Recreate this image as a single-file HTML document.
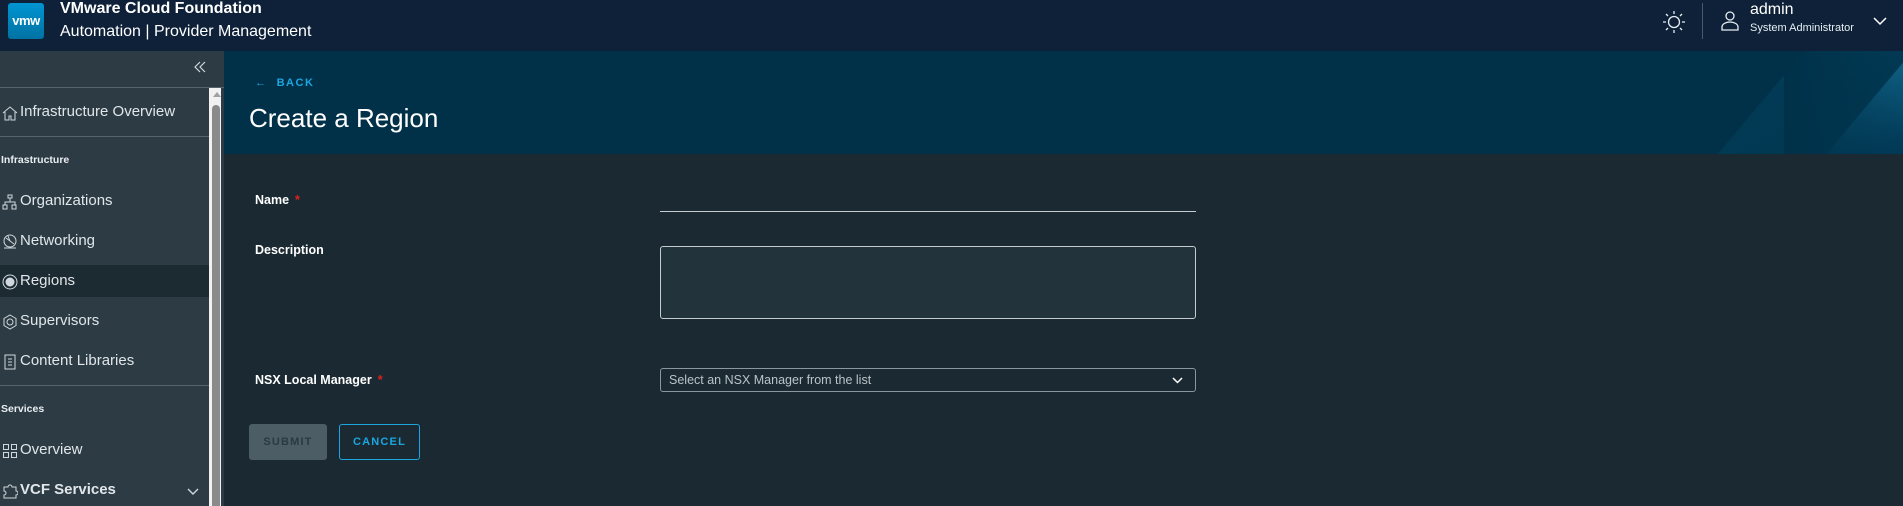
<!DOCTYPE html>
<html><head><style>
*{margin:0;padding:0;box-sizing:border-box}
body{width:1903px;height:506px;overflow:hidden;background:#1b2a32;font-family:"Liberation Sans",sans-serif;position:relative}
.hdr{position:absolute;left:0;top:0;width:1903px;height:51px;background:#0e2139}
.logo{position:absolute;left:8px;top:3px;width:36px;height:36px;border-radius:3px;background:linear-gradient(180deg,#0095d3,#0072a3);color:#fff;font-weight:bold;font-size:13px;text-align:center;line-height:36px;letter-spacing:-0.5px}
.t1{position:absolute;left:60px;top:0;color:#fff;font-weight:bold;font-size:16px}
.t2{position:absolute;left:60px;top:23px;color:#fff;font-size:16px}
.side{position:absolute;left:0;top:51px;width:224px;height:455px;background:#2d3c44}
.it{position:absolute;left:0;color:#e0e6ea;font-size:15px;height:20px;line-height:20px}
.it svg{position:absolute;left:2px;top:3px}
.it span{position:absolute;left:20px;white-space:nowrap}
.sec{position:absolute;left:1px;color:#e8edf0;font-size:10.5px;font-weight:bold}
.div{position:absolute;left:0;width:209px;height:1px;background:#56656d}
.banner{position:absolute;left:224px;top:51px;width:1679px;height:103px;background:#003149;overflow:hidden}
.lbl{position:absolute;color:#fff;font-size:12.5px;font-weight:bold}
.lbl b{color:#e02020;margin-left:6px}
</style></head><body>
<div class="hdr">
 <div class="logo">vmw</div>
 <div class="t1">VMware Cloud Foundation</div>
 <div class="t2">Automation | Provider Management</div>
 <svg style="position:absolute;left:1662px;top:10px" width="24" height="24" viewBox="0 0 24 24" fill="none" stroke="#e6eef2" stroke-width="1.3"><circle cx="12" cy="12" r="5.5"/><path d="M12 1v3M12 20v3M1 12h3M20 12h3M4 4l2 2M18 18l2 2M4 20l2-2M18 6l2-2"/></svg>
 <div style="position:absolute;left:1702px;top:3px;width:1px;height:36px;background:#4a5a68"></div>
 <svg style="position:absolute;left:1720px;top:10px" width="20" height="22" viewBox="0 0 20 22" fill="none" stroke="#e6eef2" stroke-width="1.3"><circle cx="10" cy="6" r="4"/><path d="M2 20v-3c0-3 4-5 8-5s8 2 8 5v3z"/></svg>
 <div style="position:absolute;left:1750px;top:1px;color:#fff;font-size:16px">admin</div>
 <div style="position:absolute;left:1750px;top:22px;color:#e6eef2;font-size:11px">System Administrator</div>
 <svg style="position:absolute;left:1873px;top:17px" width="14" height="9" viewBox="0 0 14 9" fill="none" stroke="#fff" stroke-width="1.5"><path d="M1 1l6 6 6-6"/></svg>
</div>
<div class="side">
 <svg style="position:absolute;left:193px;top:9px" width="14" height="14" viewBox="0 0 14 14" fill="none" stroke="#cfd8dc" stroke-width="1.2"><path d="M7 2L2 7l5 5M12 2L7 7l5 5"/></svg>
 <div class="div" style="top:36px;width:224px"></div>
 <div class="it" style="top:51px"><svg width="16" height="16" viewBox="0 0 16 16" fill="none" stroke="#cfd8dc"><path d="M1 8L8 2l7 6M3 7v8h4v-4h2v4h4V7"/></svg><span>Infrastructure Overview</span></div>
 <div class="div" style="top:85px"></div>
 <div class="sec" style="top:103px">Infrastructure</div>
 <div class="it" style="top:140px"><svg width="16" height="16" viewBox="0 0 16 16" fill="none" stroke="#cfd8dc"><rect x="6" y="1" width="4" height="3"/><rect x="1" y="11" width="4" height="4"/><rect x="10" y="11" width="4" height="4"/><path d="M8 4v4M3 11V8h10v3"/></svg><span>Organizations</span></div>
 <div class="it" style="top:180px"><svg width="16" height="16" viewBox="0 0 16 16" fill="none" stroke="#cfd8dc"><circle cx="8" cy="7" r="6"/><path d="M2 14h12M4 4l8 6M6 2l2 5"/></svg><span>Networking</span></div>
 <div style="position:absolute;left:0;top:214px;width:209px;height:32px;background:#1c2a31"></div>
 <div class="it" style="top:220px"><svg width="16" height="16" viewBox="0 0 16 16" fill="none" stroke="#cfd8dc"><circle cx="8" cy="8" r="7"/><circle cx="8" cy="8" r="4" fill="#cfd8dc"/></svg><span>Regions</span></div>
 <div class="it" style="top:260px"><svg width="16" height="16" viewBox="0 0 16 16" fill="none" stroke="#cfd8dc"><path d="M8 1l6 3.5v7L8 15l-6-3.5v-7z"/><circle cx="8" cy="8" r="3"/></svg><span>Supervisors</span></div>
 <div class="it" style="top:300px"><svg width="16" height="16" viewBox="0 0 16 16" fill="none" stroke="#cfd8dc"><rect x="3" y="1" width="10" height="14"/><path d="M6 5h4M6 8h4M6 11h4"/></svg><span>Content Libraries</span></div>
 <div class="div" style="top:334px"></div>
 <div class="sec" style="top:352px">Services</div>
 <div class="it" style="top:389px"><svg width="16" height="16" viewBox="0 0 16 16" fill="none" stroke="#cfd8dc"><rect x="1.5" y="1.5" width="5" height="5"/><rect x="9.5" y="1.5" width="5" height="5"/><rect x="1.5" y="9.5" width="5" height="5"/><rect x="9.5" y="9.5" width="5" height="5"/></svg><span>Overview</span></div>
 <div class="it" style="top:429px;font-weight:bold"><svg width="16" height="16" viewBox="0 0 16 16" fill="none" stroke="#cfd8dc"><path d="M2 4h4a2 2 0 014 0h4v4a2 2 0 010 4v3H2v-3a2 2 0 000-4z"/></svg><span>VCF Services</span></div>
 <svg style="position:absolute;left:187px;top:437px" width="12" height="8" viewBox="0 0 12 8" fill="none" stroke="#cfd8dc" stroke-width="1.4"><path d="M1 1l5 5 5-5"/></svg>
 <div style="position:absolute;left:209px;top:37px;width:12px;height:418px;background:#f1f1f1"></div>
 <div style="position:absolute;left:213px;top:41px;width:0;height:0;border-left:4px solid transparent;border-right:4px solid transparent;border-bottom:5px solid #a0a0a0"></div>
 <div style="position:absolute;left:212px;top:54px;width:8px;height:401px;background:#8a8a8a;border-radius:4px 4px 0 0"></div>
</div>
<div class="banner">
 <div style="position:absolute;left:1530px;top:-20px;width:120px;height:160px;background:linear-gradient(135deg,#064a6a,#003a55);transform:skewX(-40deg);opacity:.45"></div>
 <div style="position:absolute;left:1630px;top:-10px;width:120px;height:160px;background:linear-gradient(160deg,#1878a0 0%,#024060 60%,#003149 100%);transform:skewX(-40deg);opacity:.8"></div>
 <div style="position:absolute;left:1560px;top:0;width:130px;height:103px;background:linear-gradient(90deg,#003149,rgba(0,49,73,0))"></div>
 <div style="position:absolute;left:31px;top:26px;color:#1ba6e0;font-size:11px;font-weight:bold;letter-spacing:1.5px">&#8592;&nbsp; BACK</div>
 <div style="position:absolute;left:25px;top:52px;color:#fff;font-size:26px">Create a Region</div>
</div>
<div class="lbl" style="left:255px;top:193px">Name<b>*</b></div>
<div style="position:absolute;left:660px;top:211px;width:536px;height:1px;background:#c4ccd0"></div>
<div class="lbl" style="left:255px;top:243px">Description</div>
<div style="position:absolute;left:660px;top:246px;width:536px;height:73px;border:1px solid #c4ccd0;border-radius:3px;background:#22333b"></div>
<div class="lbl" style="left:255px;top:373px">NSX Local Manager<b>*</b></div>
<div style="position:absolute;left:660px;top:368px;width:536px;height:24px;border:1px solid #8a979e;border-radius:3px;color:#b9c3c8;font-size:12.5px;line-height:22px;padding-left:8px">Select an NSX Manager from the list
<svg style="position:absolute;right:12px;top:8px" width="11" height="7" viewBox="0 0 11 7" fill="none" stroke="#fff" stroke-width="1.5"><path d="M1 1l4.5 4.5L10 1"/></svg></div>
<div style="position:absolute;left:249px;top:424px;width:78px;height:36px;background:#4c5d66;border-radius:3px;color:#2a3a42;font-size:11px;font-weight:bold;letter-spacing:1.2px;text-align:center;line-height:36px">SUBMIT</div>
<div style="position:absolute;left:339px;top:424px;width:81px;height:36px;border:1px solid #1ba6e0;border-radius:3px;color:#1ba6e0;font-size:11px;font-weight:bold;letter-spacing:1.2px;text-align:center;line-height:34px">CANCEL</div>
</body></html>
